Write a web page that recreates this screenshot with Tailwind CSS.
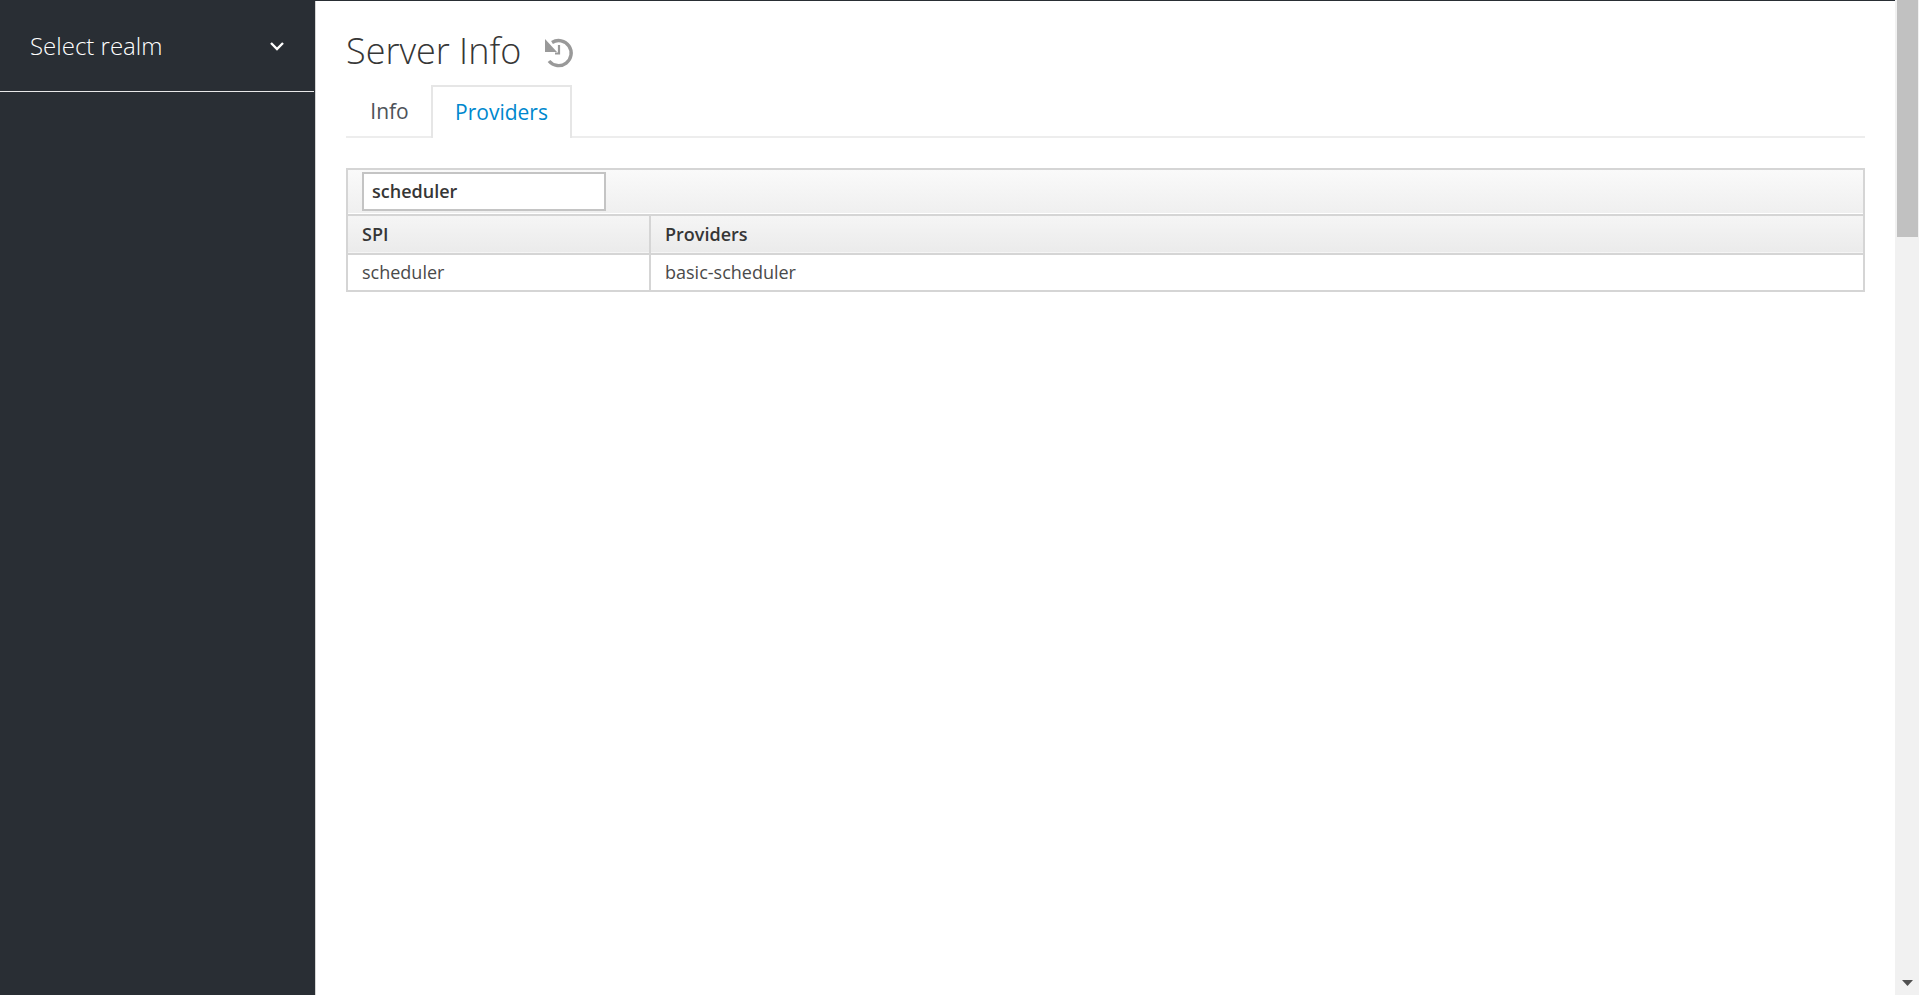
<!DOCTYPE html>
<html lang="en">
<head>
    <meta charset="UTF-8">
    <title>Server Info</title>
    <script src="https://cdn.jsdelivr.net/npm/@tailwindcss/browser@4"></script>
</head>
<body class="h-[995px] overflow-hidden bg-white font-['Open_Sans',sans-serif] text-[18px] text-[#363636]">

<div class="flex h-[995px]">
    <div class="flex flex-1 flex-col border-t border-[#292e34]">
        <div class="flex flex-1">
            <!-- sidebar -->
            <aside class="w-[315px] shrink-0 bg-[#292e34]">
                <div class="mr-[1px] flex h-[91px] items-center justify-between border-b border-[#e8e8e8] pl-[30px] pr-[29px]">
                    <span class="text-[24px] font-light text-white">Select realm</span>
                    <svg class="h-[12px] w-[16px]" viewBox="0 0 16 12" fill="none" stroke="#fff" stroke-width="2.4">
                        <path d="M2 3 L8 9 L14 3"/>
                    </svg>
                </div>
            </aside>

            <!-- main -->
            <main class="flex-1 border-l border-[#d4d4d4] pl-[30px] pr-[30px]">
                <div class="flex h-[84px] items-center gap-[23px] pt-[16px]">
                    <h1 class="text-[36px] font-light leading-none text-[#363636]">Server Info</h1>
                    <svg class="mt-[4px] h-[30px] w-[30px]" viewBox="0 0 30 30" fill="none" stroke="#999" stroke-width="3.4">
                        <path d="M8 4.5 A12.5 12.5 0 1 1 5 23"/>
                        <path d="M15 7 V15.5 H11" stroke-width="2.2"/>
                        <path d="M1 1 L1 14 L13 14 Z" fill="#999" stroke="none"/>
                    </svg>
                </div>

                <div class="flex h-[53px] border-b-2 border-[#ededed]">
                    <div class="flex w-[85px] items-center justify-center border-t-2 border-transparent pl-[2px] text-[21px] text-[#4d5258]">Info</div>
                    <div class="flex h-[53px] w-[141px] items-center justify-center border-x-2 border-t-2 border-[#e6e6e6] bg-white text-[21px] text-[#0088ce]">Providers</div>
                </div>

                <div class="mt-[30px] border-2 border-[#d5d5d5]">
                    <div class="h-[46px] border-b-2 border-[#d5d5d5] bg-gradient-to-b from-[#fafafa] to-[#efefef] pl-[14px] pt-[2px] shadow-[inset_0_-1px_0_#fff]">
                        <input value="scheduler" class="h-[39px] w-[244px] border-2 border-[#c4c4c4] bg-white px-[8px] pb-[2px] font-semibold text-[#363636] outline-none" />
                    </div>
                    <table class="w-full table-fixed border-collapse">
                        <thead>
                            <tr class="h-[38px] border-b-2 border-[#d5d5d5] bg-gradient-to-b from-[#f5f5f5] to-[#ebebeb]">
                                <th class="w-[302px] border-r-2 border-[#d5d5d5] px-[14px] text-left font-semibold">SPI</th>
                                <th class="px-[14px] text-left font-semibold">Providers</th>
                            </tr>
                        </thead>
                        <tbody class="text-[#4a4a4a]">
                            <tr class="h-[36px]">
                                <td class="border-r-2 border-[#d5d5d5] px-[14px]">scheduler</td>
                                <td class="px-[14px]">basic-scheduler</td>
                            </tr>
                        </tbody>
                    </table>
                </div>
            </main>
        </div>
    </div>

    <!-- scrollbar -->
    <div class="flex w-[24px] shrink-0 flex-col bg-[#f1f1f1] pl-[2px] pr-[1px]">
        <div class="h-[237px] bg-[#c1c1c1]"></div>
        <div class="mt-auto flex h-[24px] items-center justify-center">
            <svg class="h-[6px] w-[11px]" viewBox="0 0 11 6"><path d="M0 0 H11 L5.5 6 Z" fill="#505050"/></svg>
        </div>
    </div>
</div>

</body>
</html>
